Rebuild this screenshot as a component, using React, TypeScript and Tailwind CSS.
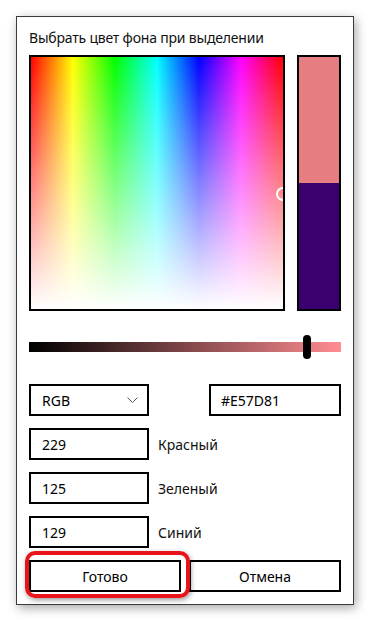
import React from "react";

const rows = [
  { value: "229", label: "Красный" },
  { value: "125", label: "Зеленый" },
  { value: "129", label: "Синий" },
];

const App = () => {
  return (
    <div className="w-[370px] h-[621px] bg-white pt-4 pl-4 font-['Noto_Sans',sans-serif] text-[14px] text-black">
      <div className="w-[338px] h-[589px] border border-[#3a3a3a] bg-white shadow-[2px_3px_10px_rgba(0,0,0,0.35)] px-3 pt-[11px]">
        {/* Title */}
        <p className="leading-5 text-[#111] tracking-[-0.2px]">Выбрать цвет фона при выделении</p>

        {/* Spectrum + preview */}
        <div className="mt-[7px] flex gap-3">
          <div className="relative w-[256px] h-[256px] border-2 border-black overflow-hidden bg-[linear-gradient(to_bottom,rgba(255,255,255,0),#fff),linear-gradient(to_right,#f00,#ff0,#0f0,#0ff,#00f,#f0f,#f00)]">
            <span className="absolute left-[245px] top-[130px] w-[14px] h-[14px] rounded-full border-2 border-white" />
          </div>
          <div className="flex-1 h-[256px] border-2 border-black flex flex-col">
            <div className="h-[126px] bg-[#e57d81]" />
            <div className="flex-1 bg-[#3b006f]" />
          </div>
        </div>

        {/* Value slider */}
        <div className="relative mt-6 h-6 flex items-center">
          <div className="w-full h-[10px] bg-[linear-gradient(to_right,#000,#ff8c91)]" />
          <span className="absolute left-[274px] top-0 w-2 h-6 rounded-full bg-black" />
        </div>

        {/* Mode + hex */}
        <div className="mt-[25px] flex justify-between">
          <div className="w-[120px] h-8 border-2 border-black flex items-center justify-between pl-[11px] pr-[9px]">
            <span>RGB</span>
            <svg width="11" height="6" viewBox="0 0 11 6" fill="none">
              <polyline points="0.5,0.5 5.5,5.5 10.5,0.5" stroke="#555" strokeWidth="1" />
            </svg>
          </div>
          <div className="w-[132px] h-8 border-2 border-black flex items-center px-[10px]">
            #E57D81
          </div>
        </div>

        {/* RGB channels */}
        {rows.map((row) => (
          <div key={row.label} className="mt-3 flex items-center gap-[9px]">
            <div className="w-[120px] h-8 border-2 border-black flex items-center pl-[11px]">
              {row.value}
            </div>
            <span className="text-[#111]">{row.label}</span>
          </div>
        ))}

        {/* Buttons */}
        <div className="mt-3 grid grid-cols-2 gap-2">
          <div className="relative">
            <button className="w-full h-8 border-2 border-black bg-white">
              Готово
            </button>
            <span className="absolute -left-1 -right-[9px] -top-[9px] -bottom-[6px] rounded-[10px] border-4 border-[#e8141a] shadow-[1px_2px_5px_rgba(0,0,0,0.4)] pointer-events-none" />
          </div>
          <button className="w-full h-8 border-2 border-black bg-white">
            Отмена
          </button>
        </div>
      </div>
    </div>
  );
};

export default App;
